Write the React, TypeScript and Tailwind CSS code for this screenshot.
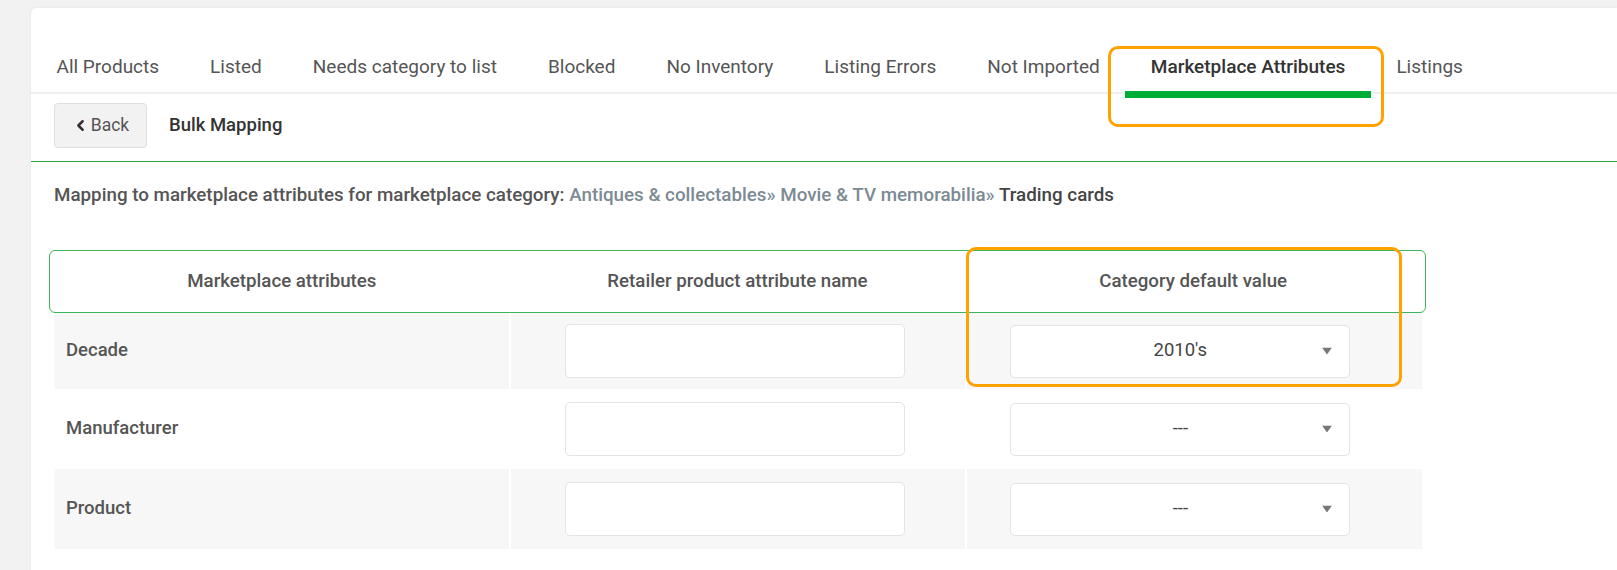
import { ChevronLeft } from "lucide-react";

const tabs = [
  "All Products",
  "Listed",
  "Needs category to list",
  "Blocked",
  "No Inventory",
  "Listing Errors",
  "Not Imported",
  "Marketplace Attributes",
  "Listings",
];

const rows = [
  { name: "Decade", value: "2010's", shaded: true, h: "h-[76px]" },
  { name: "Manufacturer", value: "---", shaded: false, h: "h-[80px]" },
  { name: "Product", value: "---", shaded: true, h: "h-[80px]" },
];

export default function App() {
  return (
    <div className="relative w-[1617px] h-[570px] overflow-hidden bg-[#f1f2f1] font-['Roboto',sans-serif]">
      <div className="ml-[31px] mt-[8px] h-[600px] bg-white rounded-tl-[6px] shadow-[0_0_3px_rgba(0,0,0,0.06)]">
        {/* Tabs */}
        <div className="pt-[34px] flex border-b-2 border-[#efefef]">
          {tabs.map((t) => {
            const active = t === "Marketplace Attributes";
            return (
              <div
                key={t}
                className={`relative h-[50px] px-[25.5px] flex items-center text-[19px] ${
                  active ? "text-[#333] font-medium" : "text-[#555]"
                }`}
              >
                {t}
                {active && (
                  <div className="absolute left-0 right-0 top-[49px] h-[7px] bg-[#00ad36]" />
                )}
              </div>
            );
          })}
        </div>

        {/* Sub header */}
        <div className="h-[68px] flex items-start pt-[9px] gap-[22px] px-[23px] border-b border-[#2aa849]">
          <button className="h-[45px] w-[93px] flex items-center justify-center gap-[2px] rounded-[4px] border border-[#dedede] bg-[#f2f2f2] text-[17.5px] text-[#555]">
            <ChevronLeft className="w-[17px] h-[17px] text-[#333]" strokeWidth={3.5} />
            Back
          </button>
          <span className="h-[45px] flex items-center text-[18.5px] font-medium text-[#333]">
            Bulk Mapping
          </span>
        </div>

        {/* Description */}
        <p className="px-[23px] pt-[21px] text-[18.8px] leading-[24px] font-medium text-[#555]">
          Mapping to marketplace attributes for marketplace category:{" "}
          <span className="text-[#7c8a93]">Antiques &amp; collectables» Movie &amp; TV memorabilia»</span>{" "}
          <span className="text-[#444]">Trading cards</span>
        </p>

        {/* Table */}
        <div className="ml-[18px] w-[1377px] mt-[43px]">
          <div className="h-[63px] border border-[#3cb55a] rounded-[6px] grid grid-cols-3 px-[4px] items-center text-[18.7px] font-medium text-[#555]">
            <div className="text-center">Marketplace attributes</div>
            <div className="text-center">Retailer product attribute name</div>
            <div className="text-center">Category default value</div>
          </div>
          <div className="ml-[5px] mr-[4px]">
            {rows.map((r) => {
              const bg = r.shaded ? "bg-[#f6f7f6]" : "bg-white";
              return (
                <div key={r.name} className={`grid grid-cols-3 gap-x-[2px] ${r.h}`}>
                  <div className={`${bg} flex items-center pl-[12px] text-[18.5px] font-medium text-[#555]`}>
                    {r.name}
                  </div>
                  <div className={`${bg} flex items-center pl-[54px]`}>
                    <div className="w-[340px] h-[54px] bg-white border border-[#e4e4e4] rounded-[5px]" />
                  </div>
                  <div className={`${bg} flex items-center pl-[43px]`}>
                    <div className="relative w-[340px] h-[53px] bg-white border border-[#e4e4e4] rounded-[5px] flex items-center justify-center text-[18.5px] text-[#444]">
                      {r.value}
                      <svg
                        className="absolute right-[17px] top-1/2 -translate-y-1/2"
                        width="10"
                        height="7"
                        viewBox="0 0 10 7"
                      >
                        <path d="M0 0 H10 L5 7 Z" fill="#777" />
                      </svg>
                    </div>
                  </div>
                </div>
              );
            })}
          </div>
        </div>
      </div>

      {/* Annotation highlights */}
      <div className="absolute left-[1108px] top-[46px] w-[276px] h-[81px] border-[3px] border-[#ffa200] rounded-[10px] pointer-events-none" />
      <div className="absolute left-[966px] top-[247px] w-[436px] h-[140px] border-[3px] border-[#ffa200] rounded-[10px] pointer-events-none" />
    </div>
  );
}
